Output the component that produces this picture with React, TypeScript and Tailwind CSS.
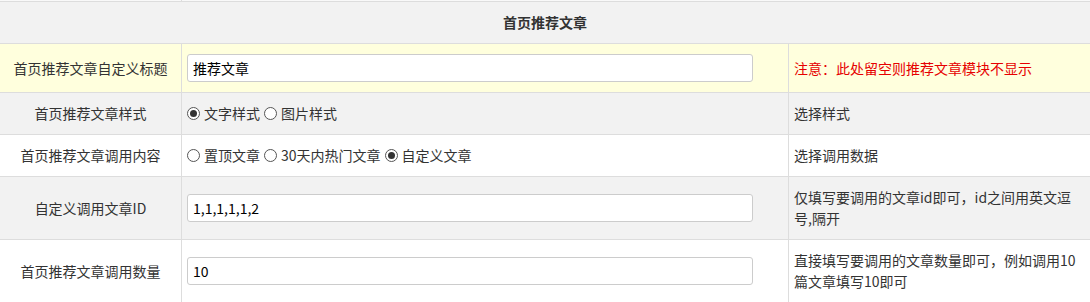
import React from "react";

const font = { fontFamily: '"Microsoft YaHei", "Noto Sans CJK SC", "Liberation Sans", sans-serif' };

function Radio({ checked }: { checked?: boolean }) {
  return (
    <span className="inline-flex w-[13px] h-[13px] rounded-full border border-[#555] bg-white items-center justify-center shrink-0">
      {checked && <span className="w-[7px] h-[7px] rounded-full bg-[#333]" />}
    </span>
  );
}

function RadioItem({ checked, label }: { checked?: boolean; label: string }) {
  return (
    <span className="inline-flex items-center gap-[4px]">
      <Radio checked={checked} />
      <span>{label}</span>
    </span>
  );
}

function Row({
  bg,
  h,
  label,
  children,
  note,
  red,
}: {
  bg: string;
  h: string;
  label: string;
  children: React.ReactNode;
  note: React.ReactNode;
  red?: boolean;
}) {
  return (
    <div className={`flex border-b border-[#ddd] ${bg} ${h}`}>
      <div className="w-[182px] shrink-0 border-r border-[#ddd] flex items-center justify-center px-[5px] text-[#333]">
        {label}
      </div>
      <div className="w-[607px] shrink-0 border-r border-[#ddd] flex items-center px-[5px] text-[#333]">
        {children}
      </div>
      <div className={`flex-1 flex items-center px-[5px] ${red ? "text-[#e60000]" : "text-[#333]"}`}>
        <div>{note}</div>
      </div>
    </div>
  );
}

function TextInput({ value }: { value: string }) {
  return (
    <div className="w-[566px] h-[28px] border border-[#ccc] rounded-[3px] bg-white flex items-center px-[5px] text-black">
      {value}
    </div>
  );
}

export default function App() {
  return (
    <div className="w-[1090px] h-[302px] overflow-hidden bg-white text-[14px] leading-[21px]" style={font}>
      <div className="flex h-[2px] border-b border-[#ddd] bg-[#f9f9f9]">
        <div className="w-[182px] border-r border-[#ddd]" />
      </div>
      <div className="h-[42px] border-b border-[#ddd] bg-[#f2f2f2] flex items-center justify-center font-bold text-[#333]">
        首页推荐文章
      </div>
      <Row
        bg="bg-[#ffffdd]"
        h="h-[49px]"
        label="首页推荐文章自定义标题"
        note="注意：此处留空则推荐文章模块不显示"
        red
      >
        <TextInput value="推荐文章" />
      </Row>
      <Row bg="bg-[#f2f2f2]" h="h-[42px]" label="首页推荐文章样式" note="选择样式">
        <div className="flex items-center gap-[4px]">
          <RadioItem checked label="文字样式" />
          <RadioItem label="图片样式" />
        </div>
      </Row>
      <Row bg="bg-white" h="h-[42px]" label="首页推荐文章调用内容" note="选择调用数据">
        <div className="flex items-center gap-[4px]">
          <RadioItem label="置顶文章" />
          <RadioItem label="30天内热门文章" />
          <RadioItem checked label="自定义文章" />
        </div>
      </Row>
      <Row
        bg="bg-[#f2f2f2]"
        h="h-[63px]"
        label="自定义调用文章ID"
        note={
          <>
            仅填写要调用的文章id即可，id之间用英文逗
            <br />
            号,隔开
          </>
        }
      >
        <TextInput value="1,1,1,1,1,2" />
      </Row>
      <Row
        bg="bg-white"
        h="h-[63px]"
        label="首页推荐文章调用数量"
        note={
          <>
            直接填写要调用的文章数量即可，例如调用10
            <br />
            篇文章填写10即可
          </>
        }
      >
        <TextInput value="10" />
      </Row>
    </div>
  );
}
